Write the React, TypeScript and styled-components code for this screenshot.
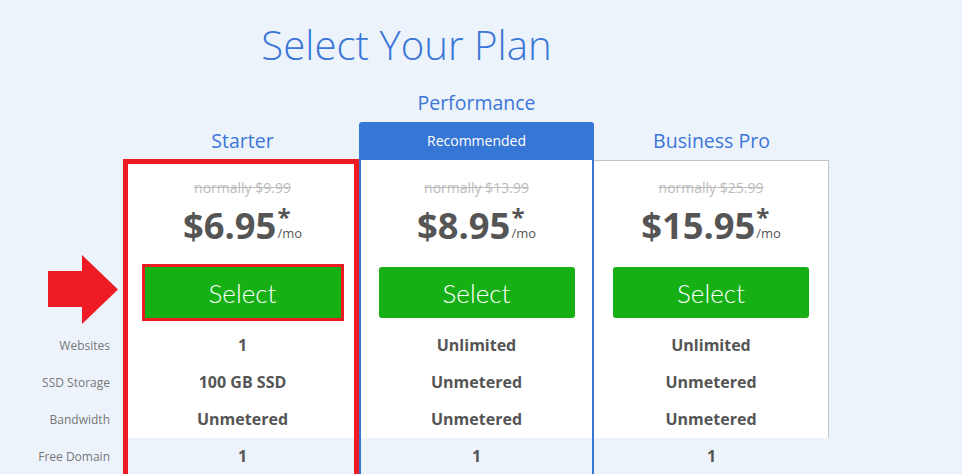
import React from 'react';
import styled, { createGlobalStyle, css } from 'styled-components';

type Variant = 'starter' | 'performance' | 'business';

const GlobalStyle = createGlobalStyle`
  html, body { margin: 0; padding: 0; background: #edf3fb; }
  body {
    font-family: "Open Sans", "Liberation Sans", sans-serif;
    width: 962px; height: 474px; overflow: hidden;
  }
`;

const Page = styled.div`
  width: 962px;
  height: 474px;
  overflow: hidden;
`;

const Title = styled.h1`
  margin: 0;
  width: 813px;
  height: 84px;
  box-sizing: border-box;
  padding-top: 20px;
  text-align: center;
  font-family: "Open Sans", sans-serif;
  font-weight: 300;
  font-size: 40.2px;
  line-height: 50px;
  color: #3b76d8;
`;

const Table = styled.div`
  display: flex;
  align-items: flex-start;
`;

const LabelCol = styled.div`
  width: 123px;
  display: flex;
  flex-direction: column;
`;

const LabelHead = styled.div`
  height: 76px;
`;

const ArrowArea = styled.div`
  height: 167px;
  box-sizing: border-box;
  padding: 95px 0 0 48px;
  display: flex;
  align-items: flex-start;
`;

const Label = styled.div`
  height: 37px;
  line-height: 37px;
  text-align: right;
  padding-right: 13px;
  font-size: 12px;
  color: #777;
`;

const PlanCol = styled.div<{ $variant: Variant }>`
  width: ${p => (p.$variant === 'starter' ? 236 : 235)}px;
  display: flex;
  flex-direction: column;
`;

const shift = css<{ $variant: Variant }>`
  padding-left: ${p => (p.$variant === 'starter' ? 3 : 0)}px;
`;

const Head = styled.div<{ $variant: Variant }>`
  height: ${p => (p.$variant === 'starter' ? 75 : 76)}px;
  display: flex;
  flex-direction: column;
  justify-content: ${p => (p.$variant === 'performance' ? 'flex-start' : 'flex-end')};
  ${shift}
`;

const PlanName = styled.div<{ $variant: Variant }>`
  height: 38px;
  line-height: ${p => (p.$variant === 'starter' ? 40 : 38)}px;
  text-align: center;
  font-size: 19.5px;
  color: #3b76d8;
`;

const Ribbon = styled.div`
  height: 38px;
  line-height: 38px;
  text-align: center;
  background: #3676d5;
  border-radius: 3px 3px 0 0;
  color: #fff;
  font-size: 14px;
`;

const Body = styled.div<{ $variant: Variant }>`
  box-sizing: border-box;
  ${p =>
    p.$variant === 'starter' &&
    css`
      border: 5px solid #ed1c24;
      border-bottom: none;
    `}
  ${p =>
    p.$variant === 'performance' &&
    css`
      border-left: 2px solid #3676d5;
      border-right: 2px solid #3676d5;
    `}
`;

const White = styled.div<{ $variant: Variant }>`
  background: #fff;
  display: flex;
  flex-direction: column;
  align-items: center;
  padding-top: ${p => (p.$variant === 'starter' ? 14 : p.$variant === 'business' ? 17 : 18)}px;
  ${shift}
  ${p =>
    p.$variant === 'business' &&
    css`
      border-top: 1px solid #c4c4c4;
      border-right: 1px solid #c4c4c4;
    `}
`;

const OldPrice = styled.div`
  height: 20px;
  line-height: 20px;
  font-size: 14px;
  color: #bcbcbc;
  text-decoration: line-through;
`;

const PriceLine = styled.div`
  margin-top: 5px;
  height: 44px;
  display: flex;
  align-items: flex-end;
  justify-content: center;
  color: #555;
`;

const Amount = styled.span`
  font-size: 36.3px;
  font-weight: 700;
  line-height: 44px;
`;

const Suffix = styled.span`
  display: flex;
  flex-direction: column;
  align-items: flex-start;
  margin: 0 0 6px 1px;
`;

const Star = styled.span`
  font-size: 24px;
  font-weight: 700;
  line-height: 16px;
  height: 16px;
`;

const Per = styled.span`
  font-size: 13px;
  line-height: 16px;
`;

const SelectButton = styled.button<{ $marked?: boolean }>`
  margin-top: 20px;
  width: 196px;
  height: 51px;
  border: none;
  border-radius: 3px;
  background: #16b014;
  color: #fff;
  font-family: Lato, "Open Sans", sans-serif;
  font-weight: 300;
  font-size: 26px;
  padding: 0;
  cursor: pointer;
  ${p =>
    p.$marked &&
    css`
      border-radius: 0;
      outline: 3px solid #ed1c24;
    `}
`;

const Features = styled.div`
  margin-top: 9px;
  align-self: stretch;
`;

const Value = styled.div`
  height: 37px;
  line-height: 37px;
  text-align: center;
  font-size: 16px;
  font-weight: 700;
  color: #555;
`;

const FreeRow = styled(Value)<{ $variant: Variant }>`
  background: #edf3fb;
  ${shift}
`;

type Plan = {
  name: string;
  variant: Variant;
  old: string;
  price: string;
  values: string[];
  domain: string;
};

const plans: Plan[] = [
  { name: 'Starter', variant: 'starter', old: 'normally $9.99', price: '$6.95', values: ['1', '100 GB SSD', 'Unmetered'], domain: '1' },
  { name: 'Performance', variant: 'performance', old: 'normally $13.99', price: '$8.95', values: ['Unlimited', 'Unmetered', 'Unmetered'], domain: '1' },
  { name: 'Business Pro', variant: 'business', old: 'normally $25.99', price: '$15.95', values: ['Unlimited', 'Unmetered', 'Unmetered'], domain: '1' },
];

const labels = ['Websites', 'SSD Storage', 'Bandwidth'];

const Arrow = () => (
  <svg width="70" height="69" viewBox="0 0 70 69">
    <polygon points="0,16 34,16 34,0 70,34.5 34,69 34,52 0,52" fill="#ed1c24" />
  </svg>
);

export default function App() {
  return (
    <Page>
      <GlobalStyle />
      <Title>Select Your Plan</Title>
      <Table>
        <LabelCol>
          <LabelHead />
          <ArrowArea>
            <Arrow />
          </ArrowArea>
          {labels.map(l => (
            <Label key={l}>{l}</Label>
          ))}
          <Label>Free Domain</Label>
        </LabelCol>
        {plans.map(p => (
          <PlanCol key={p.name} $variant={p.variant}>
            <Head $variant={p.variant}>
              <PlanName $variant={p.variant}>{p.name}</PlanName>
              {p.variant === 'performance' && <Ribbon>Recommended</Ribbon>}
            </Head>
            <Body $variant={p.variant}>
              <White $variant={p.variant}>
                <OldPrice>{p.old}</OldPrice>
                <PriceLine>
                  <Amount>{p.price}</Amount>
                  <Suffix>
                    <Star>*</Star>
                    <Per>/mo</Per>
                  </Suffix>
                </PriceLine>
                <SelectButton $marked={p.variant === 'starter'}>Select</SelectButton>
                <Features>
                  {p.values.map((v, i) => (
                    <Value key={i}>{v}</Value>
                  ))}
                </Features>
              </White>
              <FreeRow $variant={p.variant}>{p.domain}</FreeRow>
            </Body>
          </PlanCol>
        ))}
      </Table>
    </Page>
  );
}
